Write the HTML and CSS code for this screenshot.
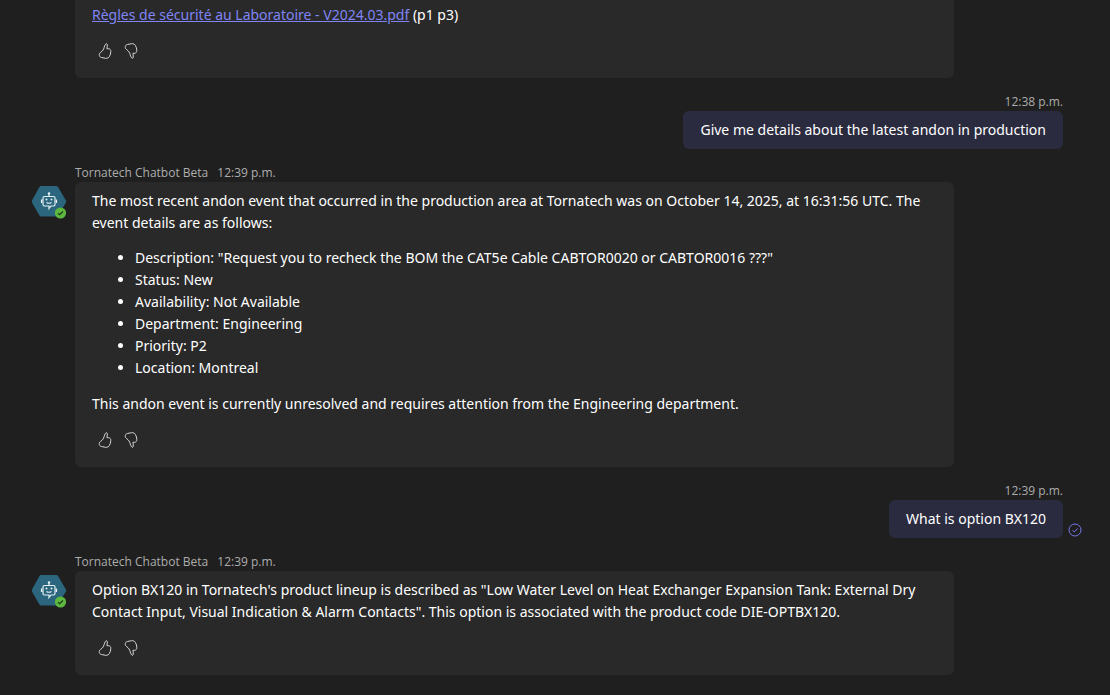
FILE: index.html
```html
<!DOCTYPE html>
<html lang="en">
<head>
    <meta charset="UTF-8">
    <meta name="viewport" content="width=device-width, initial-scale=1">
    <title>Tornatech Chatbot Beta</title>
    <link rel="stylesheet" href="styles.css">
</head>
<body>
    <svg class="sprite" aria-hidden="true">
        <symbol id="thumb" viewBox="0 0 16 18">
            <path d="M8.500 2.300c.4-.9 1.800-.7 1.800.5 0 1.500-.1 2.700-.4 3.900h1.500c1.600 0 2.600 1.300 2.400 2.800-.2 2-.5 3.400-1.300 4.900-.7 1.300-2.200 2.100-3.900 1.900l-4.200-.8c-1.200-.3-1.900-1-2.100-2-.2-1.300.2-2.300 1.300-3.100 2.200-1.600 3.100-3 3.500-4.900.3-1.300.8-2.100 1.400-3.200z"/>
        </symbol>
        <symbol id="bot" viewBox="0 0 36 36">
            <path class="hexagon" d="M10.500 2h14.500q1.500 0 2.200 1.200l7.600 13q.7 1.300 0 2.600l-7.600 12.500q-.7 1.200-2.200 1.200h-14.500q-1.500 0-2.200-1.200l-7.200-12.500q-.7-1.300 0-2.600l7.200-13q.7-1.200 2.200-1.200z"/>
            <path class="face" d="M13.500 12.500h9q1.500 0 1.500 1.500v6.500q0 1.500-1.500 1.500h-2.500l-2 2.500v-2.500h-4.500q-1.500 0-1.500-1.500v-6.500q0-1.500 1.500-1.500zM18 12.500v-2.500M10.500 15.500v3.500M25.500 15.500v3.500M15.500 18.500q2.500 1.500 5 0"/>
            <circle class="eye" cx="18" cy="9.500" r="1.200"/>
            <circle class="eye" cx="15.500" cy="15.500" r="1"/>
            <circle class="eye" cx="20.500" cy="15.500" r="1"/>
            <circle class="online" cx="29.500" cy="29" r="5.600"/>
            <path class="tick" d="M27 29.200l1.700 1.500 3.200-3.200"/>
        </symbol>
    </svg>

    <main class="chat">
        <article class="message">
            <div class="bubble continued">
                <p><a href="#">Règles de sécurité au Laboratoire - V2024.03.pdf</a> (p1 p3)</p>
                <div class="feedback">
                    <button type="button" aria-label="Like"><svg><use href="#thumb"/></svg></button>
                    <button type="button" aria-label="Dislike"><svg class="down"><use href="#thumb"/></svg></button>
                </div>
            </div>
        </article>

        <article class="message mine">
            <div class="meta"><time>12:38 p.m.</time></div>
            <div class="bubble"><p>Give me details about the latest andon in production</p></div>
        </article>

        <article class="message">
            <div class="meta"><span>Tornatech Chatbot Beta</span><time>12:39 p.m.</time></div>
            <svg class="avatar" role="img" aria-label="Available"><use href="#bot"/></svg>
            <div class="bubble">
                <p>The most recent andon event that occurred in the production area at Tornatech was on October 14, 2025, at 16:31:56 UTC. The event details are as follows:</p>
                <ul>
                    <li>Description: "Request you to recheck the BOM the CAT5e Cable CABTOR0020 or CABTOR0016 ???"</li>
                    <li>Status: New</li>
                    <li>Availability: Not Available</li>
                    <li>Department: Engineering</li>
                    <li>Priority: P2</li>
                    <li>Location: Montreal</li>
                </ul>
                <p>This andon event is currently unresolved and requires attention from the Engineering department.</p>
                <div class="feedback">
                    <button type="button" aria-label="Like"><svg><use href="#thumb"/></svg></button>
                    <button type="button" aria-label="Dislike"><svg class="down"><use href="#thumb"/></svg></button>
                </div>
            </div>
        </article>

        <article class="message mine">
            <div class="meta"><time>12:39 p.m.</time></div>
            <div class="bubble"><p>What is option BX120</p></div>
            <svg class="sent" viewBox="0 0 14 14" role="img" aria-label="Sent">
                <circle cx="7" cy="7" r="6"/>
                <path d="M4.500 7.200l1.800 1.800 3.400-3.600"/>
            </svg>
        </article>

        <article class="message">
            <div class="meta"><span>Tornatech Chatbot Beta</span><time>12:39 p.m.</time></div>
            <svg class="avatar" role="img" aria-label="Available"><use href="#bot"/></svg>
            <div class="bubble">
                <p>Option BX120 in Tornatech's product lineup is described as "Low Water Level on Heat Exchanger Expansion Tank: External Dry Contact Input, Visual Indication &amp; Alarm Contacts". This option is associated with the product code DIE-OPTBX120.</p>
                <div class="feedback">
                    <button type="button" aria-label="Like"><svg><use href="#thumb"/></svg></button>
                    <button type="button" aria-label="Dislike"><svg class="down"><use href="#thumb"/></svg></button>
                </div>
            </div>
        </article>
    </main>
</body>
</html>
```
FILE: styles.css
```css
* {
    box-sizing: border-box;
}

body {
    margin: 0;
    background-color: #1f1f1f;
    color: #fff;
    font-family: "Segoe UI", "Noto Sans", sans-serif;
    font-size: 14px;
    line-height: 22px;
}

.sprite {
    display: none;
}

.chat {
    display: flex;
    flex-direction: column;
    gap: 15px;
    padding: 0 28px 20px 31px;
}

/* avatar | bubble | sent status */
.message {
    display: grid;
    grid-template-columns: 39px 1fr 14px;
    column-gap: 5px;
}

.meta {
    grid-column: 2;
    display: flex;
    gap: 9px;
    color: #adadad;
    font-family: "Segoe UI", "Open Sans", sans-serif;
    font-size: 12px;
    line-height: 18px;
}

.avatar {
    grid-column: 1;
    grid-row: 2;
    width: 36px;
    height: 36px;
    margin-top: 2px;
}

.bubble {
    grid-column: 2;
    justify-self: start;
    width: 89%;
    padding: 8px 17px 15px;
    background-color: #292929;
    border-radius: 6px;
}

.continued {
    padding-top: 4px;
    border-radius: 0 0 6px 6px;
}

.mine .meta {
    justify-content: flex-end;
}

.mine .bubble {
    justify-self: end;
    width: auto;
    padding: 8px 17px;
    background-color: #2b2b40;
}

.sent {
    grid-column: 3;
    align-self: end;
    width: 14px;
    height: 14px;
    margin-bottom: 1px;
    fill: none;
    stroke: #7579eb;
}

p {
    margin: 0;
}

ul {
    margin: 13px 0 14px;
    padding-left: 43px;
}

a {
    color: #7f85f5;
}

.feedback {
    display: flex;
    gap: 2px;
    margin-top: 13px;
    padding-left: 1px;
}

button {
    display: grid;
    place-items: center;
    width: 24px;
    height: 24px;
    padding: 0;
    border: none;
    background: none;
    cursor: pointer;
}

button svg {
    width: 16px;
    height: 18px;
    fill: none;
    stroke: #d6d6d6;
}

.down {
    transform: scaleY(-1);
}

.hexagon {
    fill: #2b667e;
}

.face {
    fill: none;
    stroke: #e4f0f4;
    stroke-width: 1.2;
}

.eye {
    fill: #e4f0f4;
}

.online {
    fill: #5db83f;
}

.tick {
    fill: none;
    stroke: #1f3d17;
    stroke-width: 1.3;
}
```
